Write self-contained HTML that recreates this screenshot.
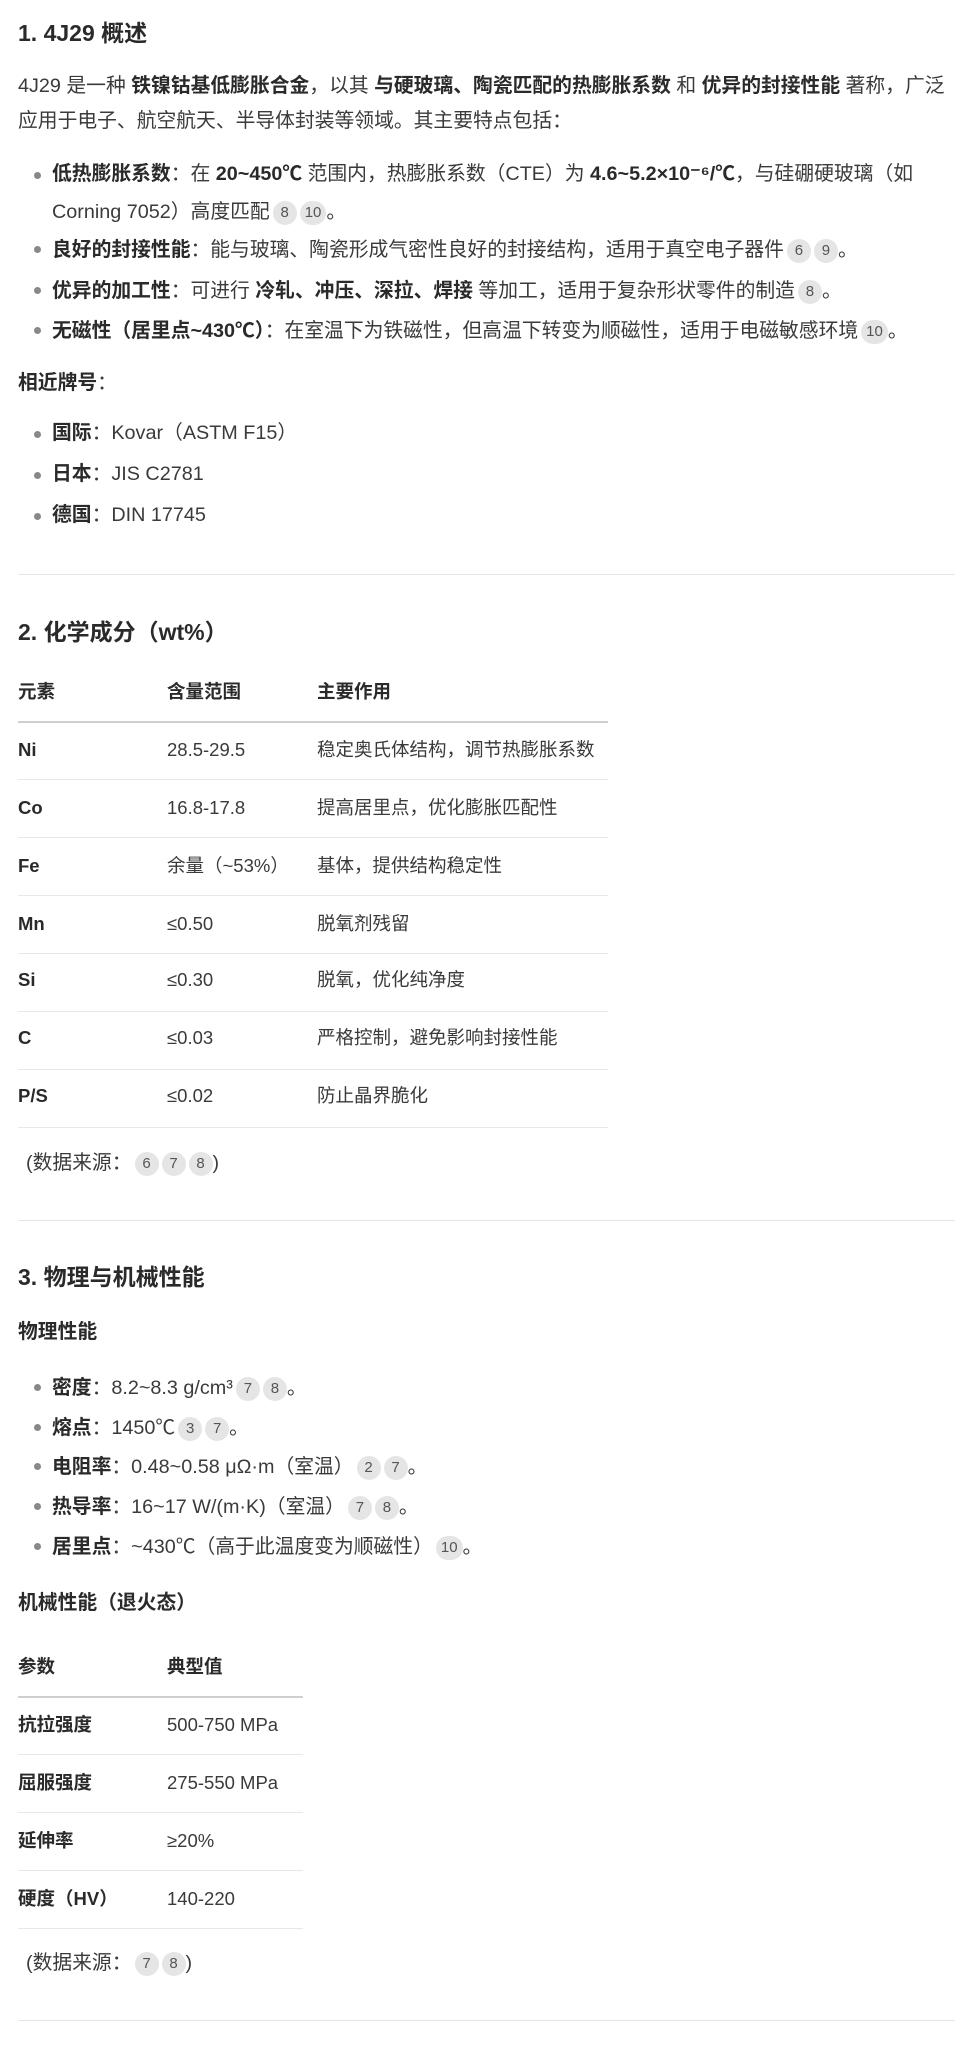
<!DOCTYPE html>
<html><head><meta charset="utf-8"><style>
*{margin:0;padding:0;box-sizing:border-box}
body{width:975px;height:2066px;background:#fff;color:#3a3a3a;font-family:"Liberation Sans","Noto Sans CJK SC",sans-serif;font-size:19.8px;position:relative;overflow:hidden}
.a{position:absolute;white-space:nowrap;line-height:1}
h2{position:absolute;left:18px;font-size:23px;font-weight:bold;color:#2a2a2a;line-height:1;white-space:nowrap}
b{font-weight:bold;color:#2a2a2a}
.dot{position:absolute;left:34px;width:7px;height:7px;border-radius:50%;background:#888}
.c{display:inline-block;min-width:24px;height:24px;padding:0 5px;border-radius:12px;background:#e5e5e5;color:#555;font-size:15px;line-height:24px;text-align:center;vertical-align:1px;margin-left:3px}
.hr{position:absolute;left:18px;width:937px;height:1px;background:#e6e6e6}
.tl{position:absolute;left:18px;height:1px;background:#e8e8e8}
.td{position:absolute;font-size:18.5px;line-height:1;white-space:nowrap}
</style></head><body>
<h2 style="top:22px">1. 4J29 概述</h2>
<div class="a" style="left:18px;top:77px">4J29 是一种 <b>铁镍钴基低膨胀合金</b>，以其 <b>与硬玻璃、陶瓷匹配的热膨胀系数</b> 和 <b>优异的封接性能</b> 著称，广泛</div>
<div class="a" style="left:18px;top:112px">应用于电子、航空航天、半导体封装等领域。其主要特点包括：</div>
<div class="dot" style="top:172px"></div><div class="a" style="left:52px;top:165px"><b>低热膨胀系数</b>：在 <b>20~450℃</b> 范围内，热膨胀系数（CTE）为 <b>4.6~5.2×10⁻⁶/℃</b>，与硅硼硬玻璃（如</div>
<div class="a" style="left:52px;top:201px">Corning 7052）高度匹配<span class="c">8</span><span class="c">10</span>。</div>
<div class="dot" style="top:246px"></div><div class="a" style="left:52px;top:239px"><b>良好的封接性能</b>：能与玻璃、陶瓷形成气密性良好的封接结构，适用于真空电子器件<span class="c">6</span><span class="c">9</span>。</div>
<div class="dot" style="top:287px"></div><div class="a" style="left:52px;top:280px"><b>优异的加工性</b>：可进行 <b>冷轧、冲压、深拉、焊接</b> 等加工，适用于复杂形状零件的制造<span class="c">8</span>。</div>
<div class="dot" style="top:327px"></div><div class="a" style="left:52px;top:320px"><b>无磁性（居里点~430℃）</b>：在室温下为铁磁性，但高温下转变为顺磁性，适用于电磁敏感环境<span class="c">10</span>。</div>
<div class="a" style="left:18px;top:374px"><b>相近牌号</b>：</div>
<div class="dot" style="top:431px"></div><div class="a" style="left:52px;top:424px"><b>国际</b>：Kovar（ASTM F15）</div>
<div class="dot" style="top:472px"></div><div class="a" style="left:52px;top:465px"><b>日本</b>：JIS C2781</div>
<div class="dot" style="top:513px"></div><div class="a" style="left:52px;top:506px"><b>德国</b>：DIN 17745</div>
<div class="hr" style="top:574px"></div>

<h2 style="top:621px">2. 化学成分（wt%）</h2>
<div class="td" style="left:18px;top:683px"><b>元素</b></div><div class="td" style="left:167px;top:683px"><b>含量范围</b></div><div class="td" style="left:317px;top:683px"><b>主要作用</b></div>
<div class="tl" style="top:721px;width:590px;height:2px;background:#cfcfcf"></div>
<div class="td" style="left:18px;top:741px"><b>Ni</b></div><div class="td" style="left:167px;top:741px">28.5-29.5</div><div class="td" style="left:317px;top:741px">稳定奥氏体结构，调节热膨胀系数</div>
<div class="tl" style="top:779px;width:590px"></div>
<div class="td" style="left:18px;top:799px"><b>Co</b></div><div class="td" style="left:167px;top:799px">16.8-17.8</div><div class="td" style="left:317px;top:799px">提高居里点，优化膨胀匹配性</div>
<div class="tl" style="top:837px;width:590px"></div>
<div class="td" style="left:18px;top:857px"><b>Fe</b></div><div class="td" style="left:167px;top:857px">余量（~53%）</div><div class="td" style="left:317px;top:857px">基体，提供结构稳定性</div>
<div class="tl" style="top:895px;width:590px"></div>
<div class="td" style="left:18px;top:915px"><b>Mn</b></div><div class="td" style="left:167px;top:915px">≤0.50</div><div class="td" style="left:317px;top:915px">脱氧剂残留</div>
<div class="tl" style="top:953px;width:590px"></div>
<div class="td" style="left:18px;top:971px"><b>Si</b></div><div class="td" style="left:167px;top:971px">≤0.30</div><div class="td" style="left:317px;top:971px">脱氧，优化纯净度</div>
<div class="tl" style="top:1011px;width:590px"></div>
<div class="td" style="left:18px;top:1029px"><b>C</b></div><div class="td" style="left:167px;top:1029px">≤0.03</div><div class="td" style="left:317px;top:1029px">严格控制，避免影响封接性能</div>
<div class="tl" style="top:1069px;width:590px"></div>
<div class="td" style="left:18px;top:1087px"><b>P/S</b></div><div class="td" style="left:167px;top:1087px">≤0.02</div><div class="td" style="left:317px;top:1087px">防止晶界脆化</div>
<div class="tl" style="top:1127px;width:590px"></div>
<div class="a" style="left:26px;top:1152px">(数据来源：<span class="c">6</span><span class="c">7</span><span class="c">8</span>)</div>
<div class="hr" style="top:1220px"></div>

<h2 style="top:1266px">3. 物理与机械性能</h2>
<div class="a" style="left:18px;top:1323px"><b>物理性能</b></div>
<div class="dot" style="top:1384px"></div><div class="a" style="left:52px;top:1377px"><b>密度</b>：8.2~8.3 g/cm³<span class="c">7</span><span class="c">8</span>。</div>
<div class="dot" style="top:1424px"></div><div class="a" style="left:52px;top:1417px"><b>熔点</b>：1450℃<span class="c">3</span><span class="c">7</span>。</div>
<div class="dot" style="top:1463px"></div><div class="a" style="left:52px;top:1456px"><b>电阻率</b>：0.48~0.58 μΩ·m（室温）<span class="c">2</span><span class="c">7</span>。</div>
<div class="dot" style="top:1503px"></div><div class="a" style="left:52px;top:1496px"><b>热导率</b>：16~17 W/(m·K)（室温）<span class="c">7</span><span class="c">8</span>。</div>
<div class="dot" style="top:1543px"></div><div class="a" style="left:52px;top:1536px"><b>居里点</b>：~430℃（高于此温度变为顺磁性）<span class="c">10</span>。</div>
<div class="a" style="left:18px;top:1594px"><b>机械性能（退火态）</b></div>
<div class="td" style="left:18px;top:1658px"><b>参数</b></div><div class="td" style="left:167px;top:1658px"><b>典型值</b></div>
<div class="tl" style="top:1696px;width:285px;height:2px;background:#cfcfcf"></div>
<div class="td" style="left:18px;top:1716px"><b>抗拉强度</b></div><div class="td" style="left:167px;top:1716px">500-750 MPa</div>
<div class="tl" style="top:1754px;width:285px"></div>
<div class="td" style="left:18px;top:1774px"><b>屈服强度</b></div><div class="td" style="left:167px;top:1774px">275-550 MPa</div>
<div class="tl" style="top:1812px;width:285px"></div>
<div class="td" style="left:18px;top:1832px"><b>延伸率</b></div><div class="td" style="left:167px;top:1832px">≥20%</div>
<div class="tl" style="top:1870px;width:285px"></div>
<div class="td" style="left:18px;top:1890px"><b>硬度（HV）</b></div><div class="td" style="left:167px;top:1890px">140-220</div>
<div class="tl" style="top:1928px;width:285px"></div>
<div class="a" style="left:26px;top:1952px">(数据来源：<span class="c">7</span><span class="c">8</span>)</div>
<div class="hr" style="top:2020px"></div>
</body></html>
